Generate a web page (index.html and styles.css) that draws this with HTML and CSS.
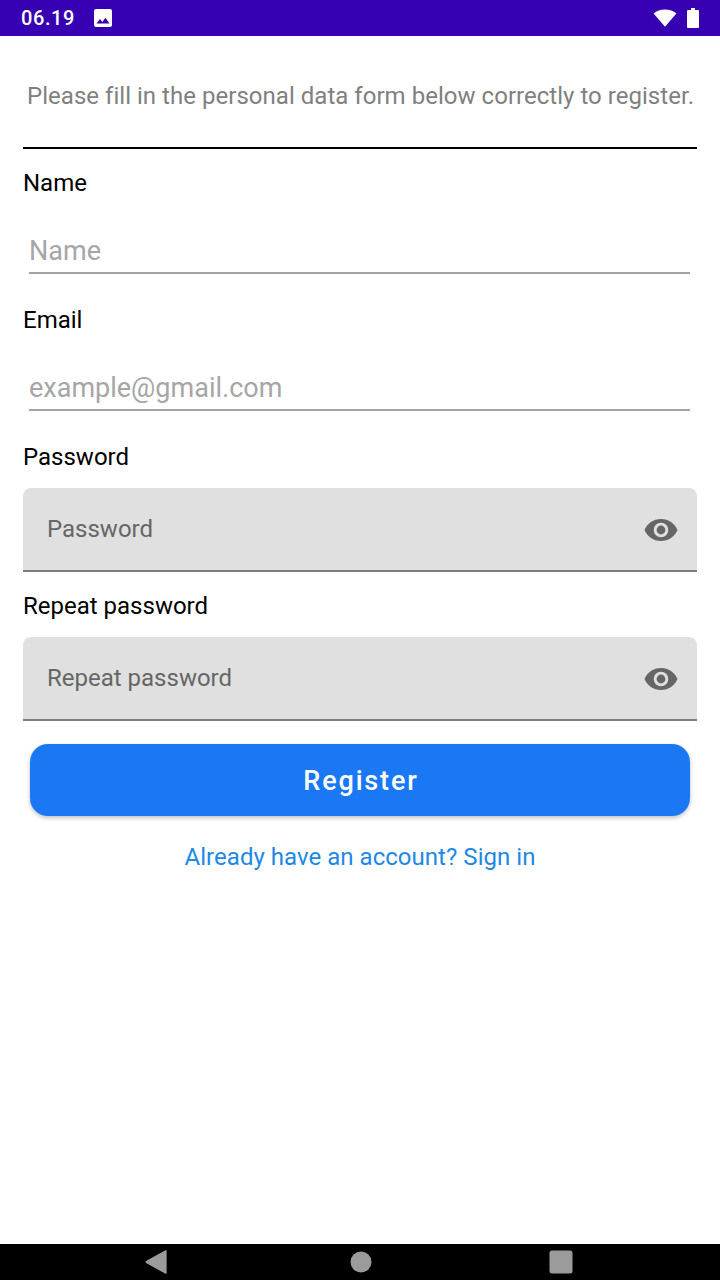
FILE: index.html
```html
<!DOCTYPE html>
<html lang="en">
<head>
<meta charset="utf-8">
<title>Register</title>
<link rel="stylesheet" href="styles.css">
</head>
<body>
<div class="screen">
  <header class="status">
    <div class="status-left">
      <span class="time">06.19</span>
      <svg class="img-icon" width="18" height="18" viewBox="0 0 18 18"><path fill="#fff" d="M2 0h14a2 2 0 0 1 2 2v14a2 2 0 0 1-2 2H2a2 2 0 0 1-2-2V2a2 2 0 0 1 2-2z"/><path fill="#3700b3" d="M2.500 14.500l3.500-4.500 2.400 3 3-4.200 4.100 5.700z"/></svg>
    </div>
    <div class="status-right">
      <svg width="24" height="18" viewBox="0 0 24 18"><path fill="#fff" d="M0.600 4.600C3.600 2 7.500 0.600 12 0.600s8.400 1.400 11.400 4L12 17.800z"/></svg>
      <svg width="12" height="20" viewBox="0 0 12 20"><path fill="#fff" d="M4 0h4v2h3a1 1 0 0 1 1 1v16a1 1 0 0 1-1 1H1a1 1 0 0 1-1-1V3a1 1 0 0 1 1-1h3z"/></svg>
    </div>
  </header>

  <main class="content">
    <p class="intro">Please fill in the personal data form below correctly to register.</p>
    <hr class="rule">

    <label class="label label-first">Name</label>
    <div class="line-field"><span class="hint">Name</span></div>

    <label class="label label-next">Email</label>
    <div class="line-field"><span class="hint">example@gmail.com</span></div>

    <label class="label label-next">Password</label>
    <div class="filled-field">
      <span class="filled-hint">Password</span>
      <svg class="eye" width="34" height="24" viewBox="0 0 34 24"><path fill="#666" fill-rule="evenodd" d="M17 1C9.500 1 3.100 5.600 0.500 12 3.100 18.400 9.500 23 17 23s13.900-4.600 16.500-11C30.900 5.600 24.500 1 17 1zm0 18.300a7.300 7.300 0 1 1 0-14.600 7.300 7.300 0 0 1 0 14.600z"/><circle fill="#666" cx="17" cy="12" r="4.400"/></svg>
    </div>

    <label class="label label-filled">Repeat password</label>
    <div class="filled-field">
      <span class="filled-hint">Repeat password</span>
      <svg class="eye" width="34" height="24" viewBox="0 0 34 24"><path fill="#666" fill-rule="evenodd" d="M17 1C9.500 1 3.100 5.600 0.500 12 3.100 18.400 9.500 23 17 23s13.900-4.600 16.500-11C30.900 5.600 24.500 1 17 1zm0 18.300a7.300 7.300 0 1 1 0-14.600 7.300 7.300 0 0 1 0 14.600z"/><circle fill="#666" cx="17" cy="12" r="4.400"/></svg>
    </div>

    <button class="register" type="button">Register</button>
    <a class="signin">Already have an account? Sign in</a>
  </main>

  <nav class="navbar">
    <svg width="24" height="26" viewBox="0 0 24 26"><path fill="#9b9b9b" d="M21.500 1.200c.6-.3 1.100 0 1.100.7v22.200c0 .7-.5 1-1.100.7L2 14c-.7-.4-.7-1.600 0-2z"/></svg>
    <svg class="nav-home" width="22" height="22" viewBox="0 0 22 22"><circle fill="#9b9b9b" cx="11" cy="11" r="10.500"/></svg>
    <svg class="nav-recent" width="24" height="24" viewBox="0 0 24 24"><rect fill="#9b9b9b" x="0.500" y="0.500" width="23" height="23" rx="2.500"/></svg>
  </nav>
</div>
</body>
</html>
```
FILE: styles.css
```css
* { box-sizing: border-box; }
html, body { margin: 0; padding: 0; }
body { font-family: Roboto, sans-serif; background: #fff; }
.screen { width: 720px; height: 1280px; display: flex; flex-direction: column; background: #fff; }

.status { height: 36px; flex: none; background: #3700b3; display: flex; justify-content: space-between; align-items: center; padding: 0 21px 0 21px; color: #fff; }
.status-left { display: flex; align-items: center; gap: 19px; }
.time { font-size: 20px; font-weight: 500; letter-spacing: 0.6px; line-height: 36px; }
.img-icon { display: block; }
.status-right { display: flex; align-items: center; gap: 10px; }
.status-right svg { display: block; }

.content { flex: 1; padding: 0 23px; display: flex; flex-direction: column; }
.intro { margin: 45px 0 0; padding-left: 4px; font-size: 24px; line-height: 30px; color: #808080; white-space: nowrap; letter-spacing: 0.03px; }
.rule { margin: 36px 0 0; border: 0; height: 2px; background: #000; flex: none; }

.label { display: block; font-size: 24px; line-height: 30px; color: #000; }
.label-first { margin-top: 19px; }
.label-next { margin-top: 31px; }
.label-filled { margin-top: 19px; }

.line-field { margin: 16px 7px 0 6px; height: 60px; border-bottom: 2px solid #a3a3a3; display: flex; align-items: flex-end; padding: 0 0 5px; }
.hint { font-size: 27px; color: #a6a6a6; line-height: 32px; }

.filled-field { margin-top: 16px; height: 84px; background: #e0e0e0; border-radius: 8px 8px 0 0; border-bottom: 2px solid #7d7d7d; display: flex; align-items: center; justify-content: space-between; padding: 0 19px 0 24px; flex: none; }
.filled-hint { font-size: 24px; color: #666; }
.eye { display: block; margin-top: 2px; }

.register { margin: 23px 7px 0; padding: 2px 0 0 2px; height: 72px; flex: none; border: 0; border-radius: 18px; background: #1a78f5; color: #fff; font-family: Roboto, sans-serif; font-size: 27px; font-weight: 500; letter-spacing: 1.85px; box-shadow: 0 2px 4px rgba(0,0,0,.25); }
.signin { margin-top: 26px; text-align: center; font-size: 24px; line-height: 30px; color: #1e88e5; letter-spacing: 0.03px; }

.navbar { height: 36px; flex: none; background: #000; display: flex; align-items: center; padding: 0 0 0 144px; }
.navbar svg { display: block; }
.nav-home { margin-left: 182px; }
.nav-recent { margin-left: 177px; }
```
